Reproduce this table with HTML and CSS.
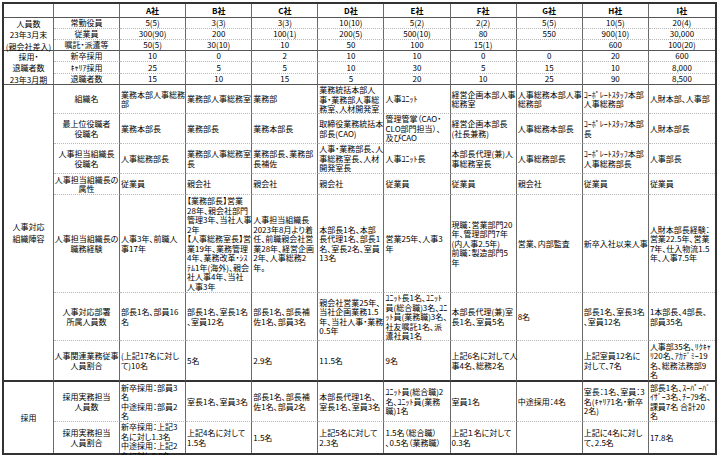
FILE: index.html
```html
<!DOCTYPE html>
<html lang="ja">
<head>
<meta charset="utf-8">
<title>人事組織比較</title>
<link rel="stylesheet" href="styles.css">
</head>
<body>
<div class="sheet">
  <div class="r sep hd"><div></div><div></div><div>A社</div><div>B社</div><div>C社</div><div>D社</div><div>E社</div><div>F社</div><div>G社</div><div>H社</div><div>I社</div></div>

  <div class="r"><div class="g g3">人員数<br>23年3月末<br>(親会社差入)</div><div>常勤役員</div><div>5(5)</div><div>3(3)</div><div>3(3)</div><div>10(10)</div><div>5(2)</div><div>2(2)</div><div>5(5)</div><div>10(5)</div><div>20(4)</div></div>
  <div class="r"><div>従業員</div><div>300(90)</div><div>200</div><div>100(1)</div><div>200(5)</div><div>500(10)</div><div>80</div><div>550</div><div>900(10)</div><div>30,000</div></div>
  <div class="r sep"><div>嘱託・派遣等</div><div>50(5)</div><div>30(10)</div><div>10</div><div>50</div><div>100</div><div>15(1)</div><div></div><div>600</div><div>100(20)</div></div>

  <div class="r"><div class="g g3">採用・<br>退職者数<br>23年3月期</div><div>新卒採用</div><div>10</div><div>0</div><div>2</div><div>10</div><div>10</div><div>0</div><div>0</div><div>20</div><div>600</div></div>
  <div class="r"><div>ｷｬﾘｱ採用</div><div>25</div><div>5</div><div>5</div><div>10</div><div>30</div><div>5</div><div>15</div><div>10</div><div>8,000</div></div>
  <div class="r sep"><div>退職者数</div><div>15</div><div>10</div><div>15</div><div>5</div><div>20</div><div>10</div><div>25</div><div>90</div><div>8,500</div></div>

  <div class="r"><div class="g g7">人事対応<br>組織陣容</div><div>組織名</div>
    <div class="l">業務本部人事総務<br>部</div>
    <div class="l">業務部人事総務室</div>
    <div class="l">業務部</div>
    <div class="l">業務統括本部人<br>事・業務部人事総<br>務室、人材開発室</div>
    <div class="l">人事ﾕﾆｯﾄ</div>
    <div class="l">経営企画本部人事<br>総務室</div>
    <div class="l">人事総務本部人事<br>総務部</div>
    <div class="l">ｺｰﾎﾟﾚｰﾄｽﾀｯﾌ本部<br>人事総務部</div>
    <div class="l">人財本部、人事部</div>
  </div>
  <div class="r"><div>最上位役職者<br>役職名</div>
    <div class="l">業務本部長</div>
    <div class="l">業務部長</div>
    <div class="l">業務本部長</div>
    <div class="l">取締役業務統括本<br>部長(CAO)</div>
    <div class="l">管理管掌（CAO・<br>CLO部門担当）、<br>及びCAO</div>
    <div class="l">経営企画本部長<br>(社長兼務)</div>
    <div class="l">人事総務本部長</div>
    <div class="l">ｺｰﾎﾟﾚｰﾄｽﾀｯﾌ本部<br>長</div>
    <div class="l">人財本部長</div>
  </div>
  <div class="r"><div>人事担当組織長<br>役職名</div>
    <div class="l">人事総務部長</div>
    <div class="l">業務部人事総務室<br>長</div>
    <div class="l">業務部長、業務部<br>長補佐</div>
    <div class="l">人事・業務部長、人<br>事総務室長、人材<br>開発室長</div>
    <div class="l">人事ﾕﾆｯﾄ長</div>
    <div class="l">本部長代理(兼)人<br>事総務室長</div>
    <div class="l">人事総務部長</div>
    <div class="l">ｺｰﾎﾟﾚｰﾄｽﾀｯﾌ本部<br>人事総務部長</div>
    <div class="l">人事部長</div>
  </div>
  <div class="r"><div>人事担当組織長の<br>属性</div>
    <div class="l">従業員</div>
    <div class="l">親会社</div>
    <div class="l">親会社</div>
    <div class="l">親会社</div>
    <div class="l">従業員</div>
    <div class="l">従業員</div>
    <div class="l">親会社</div>
    <div class="l">従業員</div>
    <div class="l">従業員</div>
  </div>
  <div class="r"><div>人事担当組織長の<br>職務経験</div>
    <div class="l">人事3年、前職人<br>事17年</div>
    <div class="l">【業務部長】営業<br>28年、親会社部門<br>管理3年、当社人事<br>2年<br>【人事総務室長】営<br>業19年、業務管理<br>4年、業務改革・ｼｽ<br>ﾃﾑ1年(海外)、親会<br>社人事4年、当社<br>人事3年</div>
    <div class="l">人事担当組織長<br>2023年8月より着<br>任、前職親会社営<br>業28年、経営企画<br>2年、人事総務2<br>年。</div>
    <div class="l">本部長1名、本部<br>長代理1名、部長1<br>名、室長2名、室員<br>13名</div>
    <div class="l">営業25年、人事3<br>年</div>
    <div class="l">現職：営業部門20<br>年、管理部門7年<br>(内人事2.5年)<br>前職：製造部門5<br>年</div>
    <div class="l">営業、内部監査</div>
    <div class="l">新卒入社以来人事</div>
    <div class="l">人財本部長経験：<br>営業22.5年、営業<br>7年、仕入物流1.5<br>年、人事7.5年</div>
  </div>
  <div class="r"><div>人事対応部署<br>所属人員数</div>
    <div class="l">部長1名、部員16<br>名</div>
    <div class="l">部長1名、室長1名<br>、室員12名</div>
    <div class="l">部長1名、部長補<br>佐1名、部員3名</div>
    <div class="l">親会社営業25年、<br>当社企画業務1.5<br>年、当社人事・業務<br>0.5年</div>
    <div class="l">ﾕﾆｯﾄ長1名、ﾕﾆｯﾄ<br>員(総合職)3名、ﾕﾆ<br>ｯﾄ員(業務職)3名、<br>社友嘱託1名、派<br>遣社員1名</div>
    <div class="l">本部長代理(兼)室<br>長1名、室員5名</div>
    <div class="l">8名</div>
    <div class="l">部長1名、室長3名<br>、室員12名</div>
    <div class="l">1本部長、4部長、<br>部員35名</div>
  </div>
  <div class="r thick"><div>人事関連業務従事<br>人員割合</div>
    <div class="l">(上記17名に対し<br>て)10名</div>
    <div class="l">5名</div>
    <div class="l">2.9名</div>
    <div class="l">11.5名</div>
    <div class="l">9名</div>
    <div class="l">上記6名に対して人<br>事4名、総務2名</div>
    <div class="l"></div>
    <div class="l">上記室員12名に<br>対して、7名</div>
    <div class="l">人事部35名、ﾘｸｷｬ<br>ﾘ20名、ｱｶﾃﾞﾐｰ19<br>名、総務法務部9<br>名</div>
  </div>

  <div class="r"><div class="g g2">採用</div><div>採用実務担当<br>人員数</div>
    <div class="l">新卒採用：部員3<br>名<br>中途採用：部員2<br>名</div>
    <div class="l">室長1名、室員3名</div>
    <div class="l">部長1名、部長補<br>佐1名、部員2名</div>
    <div class="l">本部長代理1名、<br>室長1名、室員3名</div>
    <div class="l">ﾕﾆｯﾄ員(総合職)2<br>名、ﾕﾆｯﾄ員(業務<br>職)1名</div>
    <div class="l">室員1名</div>
    <div class="l">中途採用：4名</div>
    <div class="l">室長：1名、室員：3<br>名(ｷｬﾘｱ1名・新卒<br>2名)</div>
    <div class="l">部長1名、ｽｰﾊﾟｰﾊﾞ<br>ｲｻﾞｰ3名、ﾁｰﾌ9名、<br>課員7名 合計20<br>名</div>
  </div>
  <div class="r last"><div>採用実務担当<br>人員割合</div>
    <div class="l">新卒採用：上記3<br>名に対し1.3名<br>中途採用：上記2<br>名に対し0.8名</div>
    <div class="l">上記4名に対して<br>1.5名</div>
    <div class="l">1.5名</div>
    <div class="l">上記5名に対して<br>2.3名</div>
    <div class="l">1.5名（総合職）<br>、0.5名（業務職）</div>
    <div class="l">上記１名に対して<br>0.3名</div>
    <div class="l"></div>
    <div class="l">上記に4名に対し<br>て、2.5名</div>
    <div class="l">17.8名</div>
  </div>
</div>
</body>
</html>
```
FILE: styles.css
```css
html, body {
  margin: 0;
  background: #fff;
}
body {
  padding: 2px 0 0 2px;
  font-family: "Noto Sans CJK JP", "Noto Sans", sans-serif;
  font-size: 8px;
  line-height: 9.5px;
  color: #000;
  font-feature-settings: "palt";
}
.sheet {
  display: grid;
  box-sizing: border-box;
  width: 715px;
  border: 2px solid #333;
  grid-template-columns: 50px 66px repeat(9, minmax(0, 1fr));
  grid-template-rows: 14px 11px 11px 11px 11px 12px 11px 29px 30px 30px 21px 98px 48px 41px 40px 31px;
}
.r {
  display: contents;
}
.r > div {
  box-sizing: border-box;
  min-width: 0;
  display: flex;
  align-items: safe center;
  justify-content: center;
  text-align: center;
  white-space: nowrap;
  border-right: 1px solid #6a6a6a;
  border-bottom: 1px dotted #b8b8b8;
}
.r > div:last-child {
  border-right: none;
}
.r > .l {
  justify-content: flex-start;
  text-align: left;
  padding-left: 1px;
}
.hd > div {
  font-weight: bold;
}
.sep > div {
  border-bottom: 1px solid #555;
}
.thick > div {
  border-bottom: 2px solid #333;
}
.last > div {
  border-bottom: none;
}
.r > .g {
  border-bottom: 1px solid #555;
}
.r > .g3 {
  grid-row: span 3;
  line-height: 11.3px;
}
.r > .g2 {
  grid-row: span 2;
  border-bottom: none;
}
.r > .g7 {
  grid-row: span 7;
  border-bottom: 2px solid #333;
  line-height: 12px;
}
```
